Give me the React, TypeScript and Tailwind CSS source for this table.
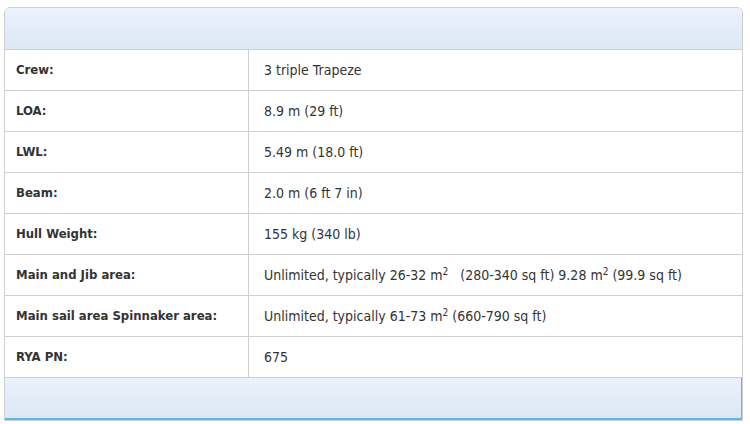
import React from 'react';

const rows: { label: string; value: React.ReactNode }[] = [
  { label: 'Crew:', value: '3 triple Trapeze' },
  { label: 'LOA:', value: '8.9 m (29 ft)' },
  { label: 'LWL:', value: '5.49 m (18.0 ft)' },
  { label: 'Beam:', value: '2.0 m (6 ft 7 in)' },
  { label: 'Hull Weight:', value: '155 kg (340 lb)' },
  {
    label: 'Main and Jib area:',
    value: (
      <>
        Unlimited, typically 26-32 m<sup className="text-[10px]">2</sup>
        {'\u00a0\u00a0\u00a0'}(280-340 sq ft) 9.28 m<sup className="text-[10px]">2</sup>{' '}(99.9 sq ft)
      </>
    ),
  },
  {
    label: 'Main sail area Spinnaker area:',
    value: (
      <>
        Unlimited, typically 61-73 m<sup className="text-[10px]">2</sup>{' '}(660-790 sq ft)
      </>
    ),
  },
  { label: 'RYA PN:', value: '675' },
];

export default function App() {
  return (
    <div className="w-[750px] h-[424px] bg-white pt-[7px] pl-[4px] text-[#333] text-[13px] font-['Tahoma','DejaVu_Sans_Condensed','DejaVu_Sans',sans-serif]">
      <div className="w-[739px] rounded-t-[6px] border border-[#cfcfcf] overflow-hidden">
        <div className="h-[42px] bg-gradient-to-b from-[#ebf2fb] to-[#dce8f7] border-b border-[#cfcfcf]" />
        {rows.map((r) => (
          <div key={r.label} className="flex h-[41px] border-b border-[#cfcfcf]">
            <div className="w-[244px] shrink-0 border-r border-[#cfcfcf] pl-[11px] flex items-center font-bold">
              {r.label}
            </div>
            <div className="flex-1 pl-[15px] flex items-center text-[14px]">
              <span>{r.value}</span>
            </div>
          </div>
        ))}
        <div className="h-[42px] bg-gradient-to-b from-[#ebf2fb] to-[#dce8f7] border-r border-b-2 border-[#55bbea]" />
      </div>
    </div>
  );
}
